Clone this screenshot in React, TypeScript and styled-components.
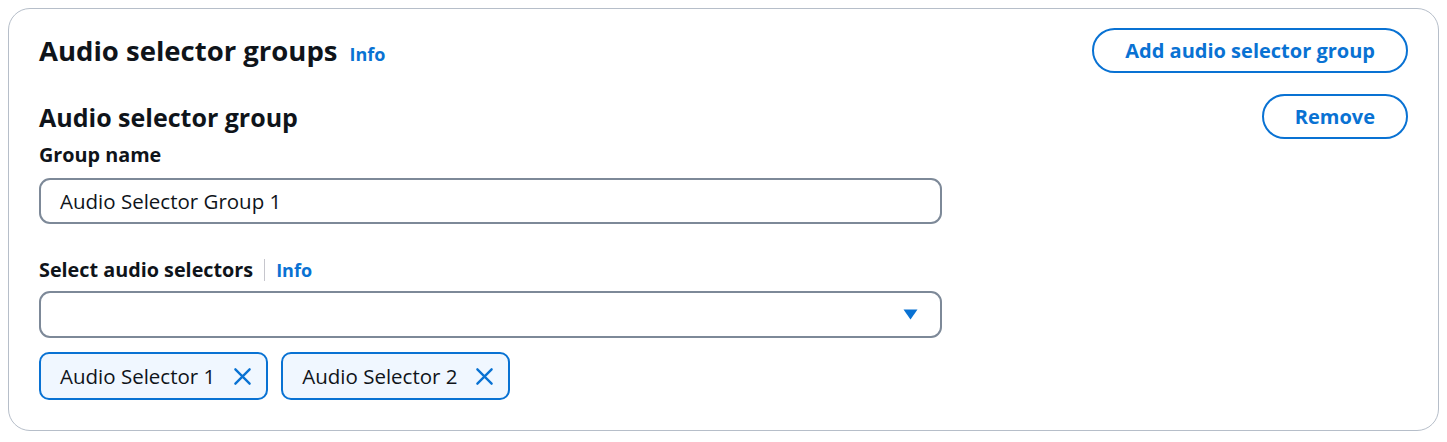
import React from "react";
import styled, { createGlobalStyle } from "styled-components";

const GlobalStyle = createGlobalStyle`
  body {
    margin: 8px;
    background: #ffffff;
    font-family: "Open Sans", "Noto Sans", Arial, sans-serif;
    color: #0f141a;
  }
  * { box-sizing: border-box; }
`;

const blue = "#0972d3";

const Container = styled.section`
  border: 1px solid #b6bec9;
  border-radius: 22px;
  padding: 19px 30px 30px 30px;
  background: #ffffff;
`;

const HeaderRow = styled.div`
  display: flex;
  align-items: center;
  justify-content: space-between;
`;

const TitleGroup = styled.div`
  display: flex;
  align-items: baseline;
  gap: 12px;
`;

const H2 = styled.h2`
  margin: 0;
  font-size: 27.5px;
  line-height: 34px;
  font-weight: 700;
  color: #0f141a;
`;

const H3 = styled.h3`
  margin: 0;
  font-size: 25px;
  line-height: 32px;
  font-weight: 700;
  color: #0f141a;
`;

const InfoLink = styled.a<{ $size?: number }>`
  font-size: ${(p) => p.$size ?? 18}px;
  font-weight: 700;
  color: ${blue};
  text-decoration: none;
  cursor: pointer;
`;

const Button = styled.button`
  font-family: inherit;
  font-size: 20px;
  line-height: 27px;
  font-weight: 700;
  color: ${blue};
  background: #ffffff;
  border: 2px solid ${blue};
  border-radius: 999px;
  padding: 7px 31px;
  cursor: pointer;
`;

const Section = styled.div`
  margin-top: 21px;
`;

const Form = styled.div`
  width: 903px;
  display: flex;
  flex-direction: column;
`;

const Label = styled.label<{ $top: number }>`
  display: flex;
  align-items: center;
  margin-top: ${(p) => p.$top}px;
  font-size: 19.8px;
  line-height: 28px;
  font-weight: 700;
  color: #0f141a;
`;

const Divider = styled.span`
  display: inline-block;
  width: 1px;
  height: 22px;
  background: #c6c6cd;
  margin: 0 11px;
`;

const Field = styled.div<{ $top: number; $h?: number }>`
  margin-top: ${(p) => p.$top}px;
  height: ${(p) => p.$h ?? 46}px;
  border: 2px solid #7d8998;
  border-radius: 11px;
  display: flex;
  align-items: center;
  justify-content: space-between;
  padding: 0 22px 0 19px;
  font-size: 20.5px;
  line-height: 28px;
  color: #0f141a;
`;

const Chips = styled.div`
  display: flex;
  gap: 13px;
  margin-top: 14px;
`;

const Chip = styled.div`
  display: flex;
  align-items: center;
  height: 48px;
  border: 2px solid ${blue};
  border-radius: 10px;
  background: #f0f7ff;
  padding: 0 14px 0 19px;
  font-size: 20.5px;
  line-height: 28px;
  color: #0f141a;
  gap: 18px;
`;

const IconBox = styled.span`
  display: inline-flex;
  width: 19px;
  height: 19px;
`;

const CloseIcon = () => (
  <IconBox>
    <svg width="19" height="19" viewBox="0 0 16 16" fill="none">
      <path d="M2 2l12 12M14 2L2 14" stroke={blue} strokeWidth="2" strokeLinecap="round" />
    </svg>
  </IconBox>
);

const CaretDown = () => (
  <svg width="15" height="11" viewBox="0 0 15 11">
    <path d="M0.5 0.5h14L7.5 10.5z" fill={blue} />
  </svg>
);

export default function App() {
  return (
    <>
      <GlobalStyle />
      <Container>
        <HeaderRow>
          <TitleGroup>
            <H2>Audio selector groups</H2>
            <InfoLink>Info</InfoLink>
          </TitleGroup>
          <Button>Add audio selector group</Button>
        </HeaderRow>
        <Section>
          <HeaderRow>
            <H3>Audio selector group</H3>
            <Button>Remove</Button>
          </HeaderRow>
          <Form>
            <Label $top={2}>Group name</Label>
            <Field $top={9}>Audio Selector Group 1</Field>
            <Label $top={32}>
              Select audio selectors
              <Divider />
              <InfoLink $size={18}>Info</InfoLink>
            </Label>
            <Field $top={7} $h={47}>
              <span />
              <CaretDown />
            </Field>
            <Chips>
              <Chip>
                Audio Selector 1
                <CloseIcon />
              </Chip>
              <Chip>
                Audio Selector 2
                <CloseIcon />
              </Chip>
            </Chips>
          </Form>
        </Section>
      </Container>
    </>
  );
}
